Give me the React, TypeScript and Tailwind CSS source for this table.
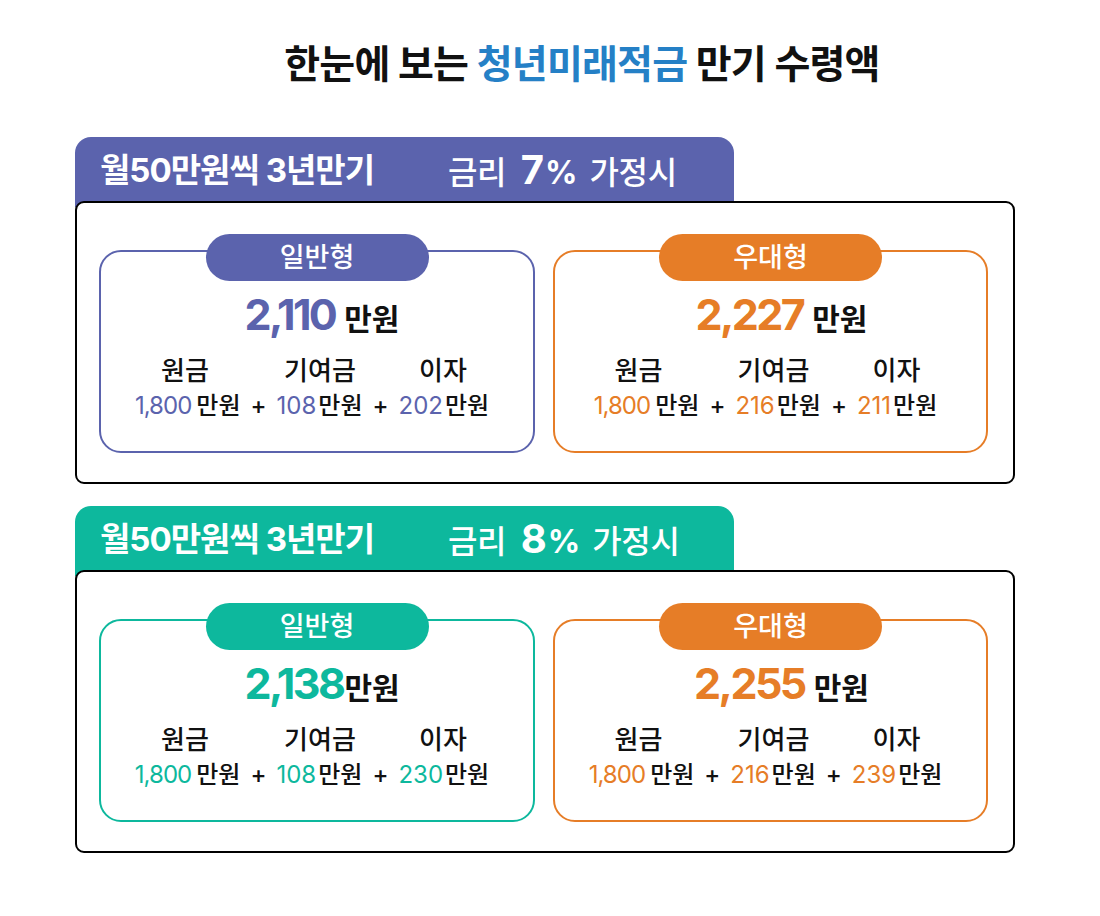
const purple = {
  tab: "bg-[#5b63ad]",
  border: "border-[#5b63ad]",
  text: "text-[#5b63ad]",
}
const green = {
  tab: "bg-[#0db89d]",
  border: "border-[#0db89d]",
  text: "text-[#0db89d]",
}
const orange = {
  tab: "bg-[#e67d27]",
  border: "border-[#e67d27]",
  text: "text-[#e67d27]",
}

type Theme = typeof purple
type Values = [string, string, string]

function PlanCard({
  theme,
  name,
  total,
  totalGap,
  values,
  shift,
}: {
  theme: Theme
  name: string
  total: string
  totalGap: boolean
  values: Values
  shift: string
}) {
  return (
    <div
      className={`flex h-[203px] flex-col items-center rounded-[22px] border-2 ${theme.border} bg-white`}
    >
      <div
        className={`-mt-[18px] flex h-[47px] w-[223px] items-center justify-center rounded-full ${theme.tab} pb-[1px] text-[27px] font-medium leading-none text-white`}
      >
        {name}
      </div>
      <div className={`mt-[13px] flex items-baseline leading-[40px] ${shift}`}>
        <span
          className={`text-[43px] font-bold tracking-[-0.06em] ${theme.text}`}
        >
          {total}
        </span>
        <span
          className={`${totalGap ? "ml-[9px]" : "ml-[1px]"} text-[30px] font-bold text-[#111]`}
        >
          만원
        </span>
      </div>
      <div className="mt-[17px] flex pr-[6px] text-[26px] font-medium leading-[30px] text-[#111]">
        <span className="w-[100px] text-center">원금</span>
        <span className="ml-[35px] w-[100px] text-center">기여금</span>
        <span className="ml-[23px] w-[100px] text-center">이자</span>
      </div>
      <div className="mt-[5px] flex items-baseline pr-[10px] text-[24px] font-medium leading-[30px] text-[#111]">
        <span className={`${theme.text} font-normal tracking-[-0.04em]`}>
          {values[0]}
        </span>
        <span className="ml-[5px]">만원</span>
        <span className="mx-[10px]">+</span>
        <span className={`${theme.text} font-normal`}>{values[1]}</span>
        <span className="ml-[2px]">만원</span>
        <span className="mx-[10px]">+</span>
        <span className={`${theme.text} font-normal`}>{values[2]}</span>
        <span className="ml-[2px]">만원</span>
      </div>
    </div>
  )
}

function Section({
  theme,
  rate,
  general,
  preferred,
}: {
  theme: Theme
  rate: string
  general: { total: string; gap: boolean; values: Values }
  preferred: { total: string; values: Values }
}) {
  return (
    <section>
      <div
        className={`flex h-[70px] w-[659px] items-center rounded-t-[16px] ${theme.tab} pb-[4px] pl-[25px] text-white`}
      >
        <span className="text-[33px] font-bold leading-none tracking-[-0.03em]">
          월50만원씩 3년만기
        </span>
        <span className="ml-[74px] flex items-baseline leading-none">
          <span className="text-[32px] font-medium tracking-[-0.02em]">
            금리
          </span>
          <span className="ml-[15px] text-[40px] font-bold">{rate}</span>
          <span className="ml-[1px] text-[32px] font-bold">%</span>
          <span className="ml-[12px] text-[32px] font-medium tracking-[-0.01em]">
            가정시
          </span>
        </span>
      </div>
      <div className="relative -mt-[6px] grid h-[283px] grid-cols-[436px_435px] gap-[18px] rounded-[9px] border-2 border-black bg-white pl-[22px] pt-[47px]">
        <PlanCard
          theme={theme}
          name="일반형"
          total={general.total}
          totalGap={general.gap}
          values={general.values}
          shift="pl-[10px]"
        />
        <PlanCard
          theme={orange}
          name="우대형"
          total={preferred.total}
          totalGap
          values={preferred.values}
          shift="pl-[22px]"
        />
      </div>
    </section>
  )
}

export default function App() {
  return (
    <main className="min-h-[916px] w-[1100px] bg-white font-['Inter','Noto_Sans_CJK_KR',sans-serif]">
      <div className="ml-[75px] w-[940px] pt-[40px]">
        <h1 className="flex justify-center pl-[74px] text-[39px] font-bold leading-[48px] tracking-[-0.02em] text-[#111]">
          한눈에 보는&nbsp;<span className="text-[#2580c6]">청년미래적금</span>
          &nbsp;만기 수령액
        </h1>
        <div className="mt-[49px] flex flex-col gap-[22px]">
          <Section
            theme={purple}
            rate="7"
            general={{ total: "2,110", gap: true, values: ["1,800", "108", "202"] }}
            preferred={{ total: "2,227", values: ["1,800", "216", "211"] }}
          />
          <Section
            theme={green}
            rate="8"
            general={{ total: "2,138", gap: false, values: ["1,800", "108", "230"] }}
            preferred={{ total: "2,255", values: ["1,800", "216", "239"] }}
          />
        </div>
      </div>
    </main>
  )
}
